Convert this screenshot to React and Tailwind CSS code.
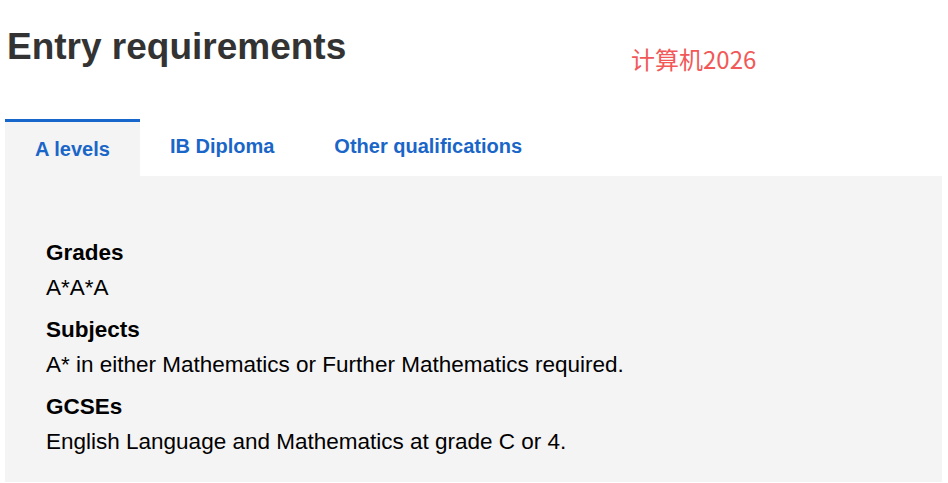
import React from "react";

const items = [
  ["Grades", "A*A*A"],
  ["Subjects", "A* in either Mathematics or Further Mathematics required."],
  ["GCSEs", "English Language and Mathematics at grade C or 4."],
];

export default function App() {
  return (
    <div className="relative w-[948px] h-[483px] bg-white overflow-hidden font-['Liberation_Sans',Arial,sans-serif]">
      <div className="absolute left-[631px] top-[44px] text-[24px] leading-[30px] text-[#f25858] font-['Noto_Sans_CJK_SC',sans-serif]">
        计算机2026
      </div>
      <div className="pl-[5px] pr-[6px]">
        <h1 className="pt-[24px] h-[119px] pl-[2px] text-[37px] leading-[46px] font-bold text-[#333]">
          Entry requirements
        </h1>
        <div className="flex items-start h-[57px]">
          <div className="border-t-[3px] border-[#1666cc] bg-[#f4f4f4] px-[30px] pt-[15px] pb-[15px] h-[57px] text-[20px] leading-[24px] font-bold text-[#1a66c8]">
            A levels
          </div>
          <div className="px-[30px] pt-[15px] pb-[15px] text-[20px] leading-[24px] font-bold text-[#1a66c8]">
            IB Diploma
          </div>
          <div className="px-[30px] pt-[15px] pb-[15px] text-[20px] leading-[24px] font-bold text-[#1a66c8]">
            Other qualifications
          </div>
        </div>
        <div className="bg-[#f4f4f4] h-[306px] pt-[60px] pl-[41px] text-[22.5px] leading-[33px] text-black">
          {items.map(([k, v]) => (
            <div key={k} className="mb-[9px]">
              <div className="font-bold mb-[2px]">{k}</div>
              <div>{v}</div>
            </div>
          ))}
        </div>
      </div>
    </div>
  );
}
